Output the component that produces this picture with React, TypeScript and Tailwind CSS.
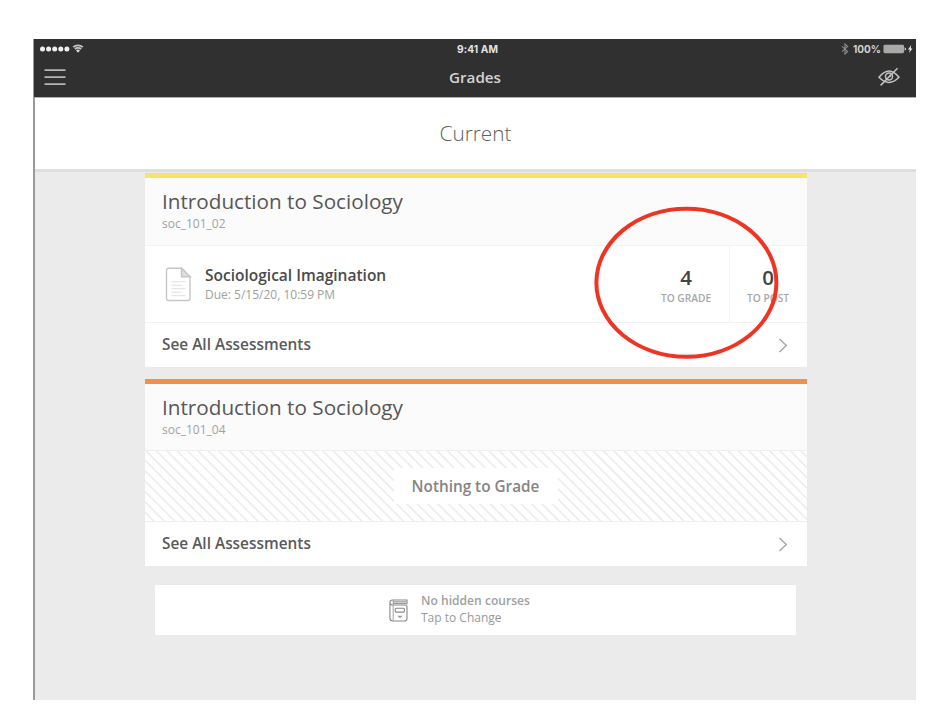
import React from "react";

const sans = "font-['Open_Sans','Noto_Sans',sans-serif]";

function StatusBar() {
  return (
    <div className="grid h-[20px] grid-cols-3 items-center font-['Inter',sans-serif] text-[10px] leading-none font-semibold text-[#e4e4e4]">
      <div className="flex items-center pl-[5px]">
        <svg width="46" height="12" viewBox="0 0 46 12">
          <g fill="#f0f0f0">
            <circle cx="3.5" cy="6" r="2.5" />
            <circle cx="9.6" cy="6" r="2.5" />
            <circle cx="15.7" cy="6" r="2.5" />
            <circle cx="21.8" cy="6" r="2.5" />
            <circle cx="27.9" cy="6" r="2.5" />
          </g>
          <g fill="none" stroke="#c4c4c4" strokeWidth="1.8">
            <path d="M34.2 4.2a7 7 0 0 1 9.6 0" />
            <path d="M35.9 6.2a4.6 4.6 0 0 1 6.2 0" />
          </g>
          <path d="M37 7.4a3 3 0 0 1 4 0L39 9.8z" fill="#d8d8d8" />
        </svg>
      </div>
      <div className="pl-[5px] text-center text-[10.2px] font-bold tracking-[0.1px]">9:41 AM</div>
      <div className="flex items-center justify-end pr-[3px] text-[#d0d0d0]">
        <svg width="8" height="12" viewBox="0 0 8 12" fill="none" stroke="#8c8c8c" strokeWidth="1.1">
          <path d="M1 3.4 6.6 8.4 4 11V1l2.6 2.6L1 8.6" />
        </svg>
        <span className="ml-[4px] text-[10px] font-bold">100%</span>
        <svg className="ml-[2px]" width="30" height="12" viewBox="0 0 30 12">
          <rect x="0.5" y="1.8" width="20.5" height="8.4" rx="1.4" fill="#a9aaa8" />
          <path d="M21.6 4.2q1.6.5 1.6 1.8t-1.6 1.8z" fill="#c8c8c8" />
          <path d="M28.2 2 25 6.6h1.9L26.1 10l3.3-4.5h-1.8z" fill="#f4f4f4" />
        </svg>
      </div>
    </div>
  );
}

function NavBar() {
  return (
    <div className="grid h-[38px] grid-cols-3 items-center pb-[2px]">
      <svg className="ml-[10px]" width="22" height="18" viewBox="0 0 22 18" stroke="#b4b4b4" strokeWidth="1.7">
        <path d="M.5 2.2h21M.5 9.2h21M.5 16.2h21" />
      </svg>
      <div className="text-center text-[15.2px] leading-[20px] font-semibold text-[#d4d4d4]">Grades</div>
      <svg className="mr-[16px] justify-self-end" width="22" height="20" viewBox="0 0 22 20" fill="none" stroke="#c2c2c2" strokeWidth="1.5">
        <path d="M1 10.3Q11-2.3 21 10.3 11 20.6 1 10.3Z" />
        <circle cx="11" cy="9.6" r="3.5" />
        <path d="M11 8.1a1.6 1.6 0 0 1 1.5 1.8" strokeWidth="1" />
        <path d="M19.5 1.2 2.6 18.4" />
      </svg>
    </div>
  );
}

function CardHeader({ code }: { code: string }) {
  return (
    <div className="h-full bg-[#fbfbfb] pl-[17px]">
      <div className="pt-[9px] text-[20.7px] leading-[28px] whitespace-nowrap text-[#575757]">Introduction to Sociology</div>
      <div className="mt-[1px] text-[12px] leading-[15px] text-[#a2a2a2]">{code}</div>
    </div>
  );
}

function SeeAll() {
  return (
    <div className="flex h-[44px] items-center justify-between bg-white pr-[19px] pl-[17px]">
      <span className="pb-[1px] text-[15.4px] leading-[20px] font-semibold text-[#5a5a5a]">See All Assessments</span>
      <svg width="10" height="15" viewBox="0 0 10 15" fill="none" stroke="#a8a8a8" strokeWidth="1.5">
        <path d="m1.5 1 6.8 6.5L1.5 14" />
      </svg>
    </div>
  );
}

function Count({ value, label }: { value: string; label: string }) {
  return (
    <div className="flex flex-col items-center">
      <span className="text-[20.5px] leading-[24px] font-semibold text-[#444]">{value}</span>
      <span className="mt-[2px] text-[10.2px] leading-[14px] font-semibold whitespace-nowrap text-[#a8a8a8]">{label}</span>
    </div>
  );
}

export default function App() {
  return (
    <div className={`h-[726px] w-[950px] overflow-hidden bg-white pt-[39px] pl-[33px] ${sans}`}>
      <div className="relative flex h-[661px] w-[883px] flex-col border-l-2 border-[#9a9a9a] bg-[#ebebeb]">
        <header className="-ml-[1px] h-[58px] shrink-0 bg-[#303030]">
          <StatusBar />
          <NavBar />
        </header>
        <div className="flex h-[72px] shrink-0 items-center justify-center border-t border-[#b0b0b0] bg-white pt-[1px] text-[20.8px] font-light text-[#606060]">
          Current
        </div>
        <div className="h-[3px] shrink-0 bg-[#dedede]" />

        <main className="mt-[1px] ml-[110px] w-[662px]">
          <section className="bg-white">
            <div className="h-[5px] bg-[#fae16a]" />
            <div className="h-[67px]">
              <CardHeader code="soc_101_02" />
            </div>
            <div className="flex h-[78px] border-y border-[#f2f2f2]">
              <svg className="mt-[21px] ml-[20px]" width="27" height="35" viewBox="0 0 27 35" fill="none" stroke="#c6c6c6" strokeWidth="1.4">
                <path d="M3.5 1.2h13L25 9.8v21.7a2 2 0 0 1-2 2H3.5a2 2 0 0 1-2-2V3.2a2 2 0 0 1 2-2Z" />
                <path d="M16.5 1.2v8.6H25Z" fill="#dedede" />
                <path d="M6.5 14.7h14M6.5 18.2h10M6.5 21.7h14M6.5 25.2h10M6.5 28.7h14" stroke="#e0e0e0" strokeWidth="1" />
              </svg>
              <div className="ml-[13px] flex-1 pt-[19px]">
                <div className="text-[15.5px] leading-[20px] font-semibold text-[#4a4a4a]">Sociological Imagination</div>
                <div className="mt-[1px] text-[12px] leading-[18px] text-[#a0a0a0]">Due: 5/15/20, 10:59 PM</div>
              </div>
              <div className="w-[87px] border-r border-[#f2f2f2] pt-[19px]">
                <Count value="4" label="TO GRADE" />
              </div>
              <div className="w-[76px] pt-[19px]">
                <Count value="0" label="TO POST" />
              </div>
              <div className="w-px" />
            </div>
            <SeeAll />
          </section>

          <section className="mt-[12px] bg-white">
            <div className="h-[5px] bg-[#f0904a]" />
            <div className="h-[66px]">
              <CardHeader code="soc_101_04" />
            </div>
            <div className="flex h-[72px] items-center justify-center border-y border-[#efefef] bg-[repeating-linear-gradient(45deg,#fff_0px,#fff_5px,#eee_5.6px,#eee_6.8px,#fff_7.35px)]">
              <div className="flex h-[36px] w-[164px] items-center justify-center bg-white pt-[1px] pr-[1px] text-[15.3px] font-semibold text-[#858585]">
                Nothing to Grade
              </div>
            </div>
            <SeeAll />
          </section>

          <section className="mt-[19px] ml-[10px] flex h-[50px] w-[641px] items-center bg-white">
            <svg className="ml-[234px]" width="19" height="23" viewBox="0 0 19 23" fill="none" stroke="#888" strokeWidth="1.1">
              <path d="M18 5.5V1H3.6Q.9 1 .9 3.7V19q0 3 3 3h11.3q2.8 0 2.8-2.8V8Q18 6 16 6H3.6Q1 6 .9 3.7" />
              <path d="M4.2 1v20.8" stroke="#aaa" />
              <path d="M4 2.8h13.5M4 4.4h13.5" stroke="#999" />
              <rect x="6.2" y="9.3" width="9.2" height="3.8" rx="1" />
              <path d="M8.2 16.8h5.6L11 19.2z" fill="#999" stroke="none" />
            </svg>
            <div className="ml-[13px] pb-[1px] leading-[16.5px]">
              <div className="text-[12.1px] font-semibold text-[#a0a0a0]">No hidden courses</div>
              <div className="text-[12px] text-[#999]">Tap to Change</div>
            </div>
          </section>
        </main>

        <svg className="pointer-events-none absolute top-[166px] left-[558px]" width="190" height="156" viewBox="0 0 190 156" fill="none">
          <ellipse cx="93.4" cy="77.7" rx="90" ry="74" stroke="#ee3524" strokeWidth="4" />
        </svg>
      </div>
    </div>
  );
}
